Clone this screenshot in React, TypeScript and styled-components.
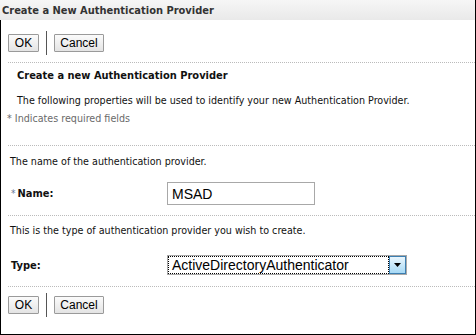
import styled, { createGlobalStyle } from 'styled-components'

const GlobalStyle = createGlobalStyle`
  html, body { margin: 0; padding: 0; background: #fff; }
  body { font-family: "DejaVu Sans Condensed", "DejaVu Sans", sans-serif; }
`

const Frame = styled.div`
  width: 476px;
  height: 335px;
  box-sizing: border-box;
  border-right: 1px solid #000;
  border-bottom: 1px solid #000;
  display: flex;
  flex-direction: column;
`

const TitleBar = styled.div`
  height: 20px;
  padding-left: 2px;
  display: flex;
  align-items: center;
  background: linear-gradient(#f6f6f6, #e9e9e9);
  font: bold 11px "DejaVu Sans Condensed", "DejaVu Sans", sans-serif;
  color: #333;
`

const Body = styled.div`
  flex: 1;
  border-left: 1px solid #000;
  display: flex;
  flex-direction: column;
`

const Toolbar = styled.div<{ $top: number }>`
  display: flex;
  align-items: center;
  gap: 4px;
  padding: ${p => p.$top}px 0 0 7px;
  height: 24px;
`

const Btn = styled.button<{ $w: number }>`
  width: ${p => p.$w}px;
  height: 18px;
  padding: 0;
  border: 1px solid #9a9a9a;
  border-radius: 1px;
  background: linear-gradient(#fbfbfb, #e4e4e4);
  font: 12px "Liberation Sans", Arial, sans-serif;
  color: #000;
`

const VSep = styled.span`
  width: 1px;
  height: 24px;
  background: #555;
  margin: 0 3px;
`

const Dotted = styled.div<{ $mt: number }>`
  margin: ${p => p.$mt}px 0 0 7px;
  border-top: 1px dotted #bbb;
`

const Text = styled.div<{ $mt: number; $x: number; $bold?: boolean; $gray?: boolean }>`
  margin: ${p => p.$mt}px 0 0 ${p => p.$x}px;
  height: 14px;
  line-height: 14px;
  font-size: ${p => (p.$bold ? 11 : 10.65)}px;
  font-weight: ${p => (p.$bold ? 'bold' : 'normal')};
  color: ${p => (p.$gray ? '#6a6a6a' : '#111')};
  white-space: nowrap;
`

const FieldRow = styled.div<{ $mt: number }>`
  display: flex;
  align-items: center;
  margin-top: ${p => p.$mt}px;
  padding-left: 10px;
`

const Label = styled.div`
  width: 156px;
  font-size: 11px;
  font-weight: bold;
  color: #111;
  display: flex;
  align-items: baseline;
`

const Star = styled.span`
  color: #6b7a99;
  font-weight: normal;
  font-size: 10px;
  margin-right: 2px;
`

const Input = styled.div`
  width: 148px;
  height: 23px;
  box-sizing: border-box;
  border: 1px solid #a8a8a8;
  padding-left: 4px;
  display: flex;
  align-items: center;
  font: 14px "Liberation Sans", Arial, sans-serif;
  color: #000;
`

const Select = styled.div`
  width: 240px;
  height: 20px;
  box-sizing: border-box;
  border: 1px solid #a8a8a8;
  display: flex;
  font: 14px "Liberation Sans", Arial, sans-serif;
  color: #000;
`

const SelectValue = styled.div`
  flex: 1;
  outline: 1px dotted #000;
  outline-offset: -1px;
  padding-left: 4px;
  display: flex;
  align-items: center;
`

const Arrow = styled.div`
  width: 17px;
  box-sizing: border-box;
  border: 1px solid #3c7fb1;
  background: linear-gradient(#eaf6fd, #a7d9f5);
  display: flex;
  align-items: center;
  justify-content: center;
`

const Toolbuttons = ({ top }: { top: number }) => (
  <Toolbar $top={top}>
    <Btn $w={31}>OK</Btn>
    <VSep />
    <Btn $w={50}>Cancel</Btn>
  </Toolbar>
)

export default function App() {
  return (
    <>
      <GlobalStyle />
      <Frame>
        <TitleBar>Create a New Authentication Provider</TitleBar>
        <Body>
          <Toolbuttons top={11} />
          <Dotted $mt={7} />
          <Text $mt={6} $x={16} $bold>Create a new Authentication Provider</Text>
          <Text $mt={11} $x={16}>The following properties will be used to identify your new Authentication Provider.</Text>
          <Text $mt={4} $x={6} $gray>* Indicates required fields</Text>
          <Dotted $mt={19} />
          <Text $mt={9} $x={9}>The name of the authentication provider.</Text>
          <FieldRow $mt={13}>
            <Label><Star>*</Star>Name:</Label>
            <Input>MSAD</Input>
          </FieldRow>
          <Dotted $mt={10} />
          <Text $mt={8} $x={9}>This is the type of authentication provider you wish to create.</Text>
          <FieldRow $mt={17}>
            <Label>Type:</Label>
            <Select>
              <SelectValue>ActiveDirectoryAuthenticator</SelectValue>
              <Arrow>
                <svg width="7" height="4" viewBox="0 0 7 4"><path d="M0 0h7L3.5 4z" fill="#000" /></svg>
              </Arrow>
            </Select>
          </FieldRow>
          <Dotted $mt={11} />
          <Toolbuttons top={6} />
        </Body>
      </Frame>
    </>
  )
}
